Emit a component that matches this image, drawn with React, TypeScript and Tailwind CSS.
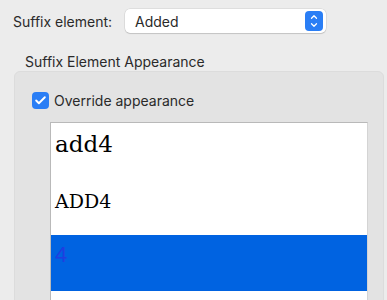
import { Check, ChevronDown, ChevronUp } from 'lucide-react';

const rows = [
  { label: 'add4', className: "pt-[10px] font-['DejaVu_Serif',serif] text-[23px] leading-[23px] text-black" },
  { label: 'ADD4', className: "pt-[13px] font-['DejaVu_Serif',serif] text-[19px] leading-[19px] text-black" },
];

export default function App() {
  return (
    <div className="w-[387px] h-[300px] overflow-hidden bg-[#ececec] font-['Inter','Noto_Sans',sans-serif] text-[14px] leading-[17px] text-[#2a2a2a]">
      <div className="flex items-center pt-[9px] pl-[13px]">
        <span className="w-[112px]">Suffix element:</span>
        <div className="flex h-[24px] w-[201px] items-center justify-between rounded-[5px] bg-white pl-[10px] pr-[3px] shadow-[0_0_0_0.5px_rgba(0,0,0,0.12),0_1px_1px_rgba(0,0,0,0.12)]">
          <span>Added</span>
          <span className="flex h-[20px] w-[18px] flex-col items-center justify-center rounded-[4px] bg-[#2a7ef5] text-white">
            <ChevronUp size={10} strokeWidth={3} className="-mb-[2px]" />
            <ChevronDown size={10} strokeWidth={3} />
          </span>
        </div>
      </div>

      <div className="pl-[25px] pt-[20px] leading-[17px]">Suffix Element Appearance</div>

      <div className="ml-[14px] mt-[1px] h-[240px] w-[370px] rounded-[6px] border border-[#dcdcdc] bg-[#e3e3e3] pt-[20px]">
        <label className="flex items-center gap-[5px] pl-[17px]">
          <span className="flex h-[17px] w-[17px] items-center justify-center rounded-[4px] bg-[#2a7ef5] text-white">
            <Check size={13} strokeWidth={3.5} />
          </span>
          <span>Override appearance</span>
        </label>

        <div className="ml-[35px] mt-[13px] w-[318px] border-l border-t border-r border-[#b9b9b9] border-r-[#d4d4d4] bg-white">
          {rows.map(row => (
            <div key={row.label} className="h-[56px] pl-[4px]">
              <div className={row.className}>{row.label}</div>
            </div>
          ))}
          <div className="h-[56px] bg-[#0063e1] pl-[4px] pt-[9px]">
            <div className="font-['Liberation_Sans',sans-serif] text-[22px] leading-[22px] text-[#1f3ee0]">4</div>
          </div>
          <div className="h-[40px]" />
        </div>
      </div>
    </div>
  );
}
